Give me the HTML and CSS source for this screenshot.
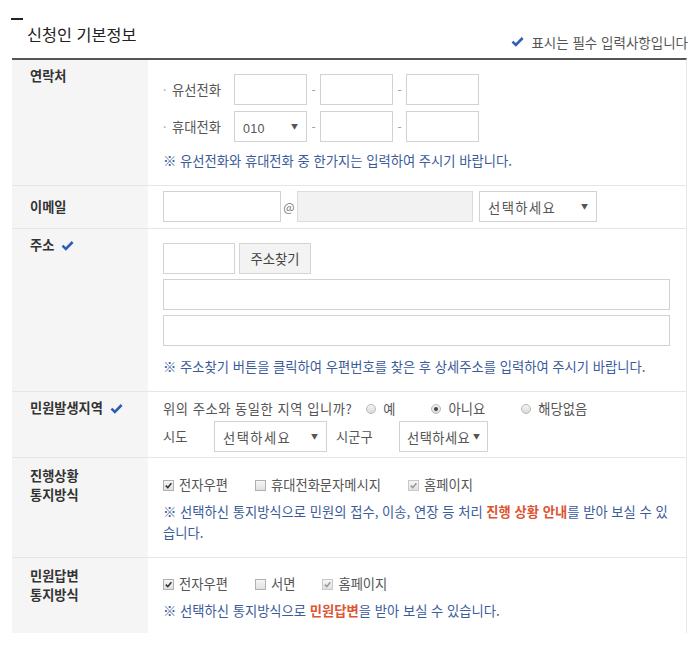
FILE: index.html
```html
<!DOCTYPE html>
<html lang="ko">
<head>
<meta charset="utf-8">
<title>신청인 기본정보</title>
<link rel="stylesheet" href="styles.css">
</head>
<body>
<div class="head">
  <div class="title-wrap">
    <span class="dash"></span>
    <h2 class="title">신청인 기본정보</h2>
  </div>
  <p class="req"><svg class="chk" viewBox="0 0 14 12"><path d="M1.5 6.2 L5.2 9.8 L12.6 2.2"/></svg>표시는 필수 입력사항입니다</p>
</div>

<div class="form">
  <div class="row r1">
    <div class="lbl">연락처</div>
    <div class="cell">
      <div class="line">
        <span class="ph-label"><i class="dot">·</i>유선전화</span>
        <input class="in w73" type="text"><span class="sep">-</span><input class="in w73" type="text"><span class="sep">-</span><input class="in w73" type="text">
      </div>
      <div class="line gap6">
        <span class="ph-label"><i class="dot">·</i>휴대전화</span>
        <div class="sel w73"><span class="sel-txt num">010</span><span class="arr">▼</span></div><span class="sep">-</span><input class="in w73" type="text"><span class="sep">-</span><input class="in w73" type="text">
      </div>
      <p class="note n1">※ 유선전화와 휴대전화 중 한가지는 입력하여 주시기 바랍니다.</p>
    </div>
  </div>

  <div class="row r2">
    <div class="lbl mid">이메일</div>
    <div class="cell">
      <div class="line">
        <input class="in w118" type="text"><span class="at">@</span><input class="in w176 gray" type="text"><div class="sel w118 ml6"><span class="sel-txt">선택하세요</span><span class="arr">▼</span></div>
      </div>
    </div>
  </div>

  <div class="row r3">
    <div class="lbl">주소 <svg class="chk lchk" viewBox="0 0 14 12"><path d="M1.5 6.2 L5.2 9.8 L12.6 2.2"/></svg></div>
    <div class="cell">
      <div class="line">
        <input class="in w72" type="text"><button class="btn" type="button">주소찾기</button>
      </div>
      <input class="in wide gap5" type="text">
      <input class="in wide gap5" type="text">
      <p class="note n3">※ 주소찾기 버튼을 클릭하여 우편번호를 찾은 후 상세주소를 입력하여 주시기 바랍니다.</p>
    </div>
  </div>

  <div class="row r4">
    <div class="lbl">민원발생지역 <svg class="chk lchk" viewBox="0 0 14 12"><path d="M1.5 6.2 L5.2 9.8 L12.6 2.2"/></svg></div>
    <div class="cell">
      <div class="line txt">
        <span class="q">위의 주소와 동일한 지역 입니까?</span>
        <label class="opt first"><span class="radio"></span>예</label>
        <label class="opt"><span class="radio on"></span>아니요</label>
        <label class="opt"><span class="radio"></span>해당없음</label>
      </div>
      <div class="line sido">
        <span class="k1">시도</span>
        <div class="sel w113"><span class="sel-txt">선택하세요</span><span class="arr">▼</span></div>
        <span class="k2">시군구</span>
        <div class="sel w89 tight"><span class="sel-txt">선택하세요</span><span class="arr">▼</span></div>
      </div>
    </div>
  </div>

  <div class="row r5">
    <div class="lbl two"><span class="ln">진행상황</span><span class="ln">통지방식</span></div>
    <div class="cell">
      <div class="line txt">
        <label class="ck"><span class="cb on"><svg viewBox="0 0 10 10"><path d="M2 5.2 L4.2 7.4 L8.2 2.6"/></svg></span>전자우편</label>
        <label class="ck"><span class="cb"></span>휴대전화문자메시지</label>
        <label class="ck"><span class="cb on dis"><svg viewBox="0 0 10 10"><path d="M2 5.2 L4.2 7.4 L8.2 2.6"/></svg></span>홈페이지</label>
      </div>
      <p class="note n5">※ 선택하신 통지방식으로 민원의 접수, 이송, 연장 등 처리 <b class="em">진행 상황 안내</b>를 받아 보실 수 있습니다.</p>
    </div>
  </div>

  <div class="row r6">
    <div class="lbl two"><span class="ln">민원답변</span><span class="ln">통지방식</span></div>
    <div class="cell">
      <div class="line txt">
        <label class="ck"><span class="cb on"><svg viewBox="0 0 10 10"><path d="M2 5.2 L4.2 7.4 L8.2 2.6"/></svg></span>전자우편</label>
        <label class="ck"><span class="cb"></span>서면</label>
        <label class="ck"><span class="cb on dis"><svg viewBox="0 0 10 10"><path d="M2 5.2 L4.2 7.4 L8.2 2.6"/></svg></span>홈페이지</label>
      </div>
      <p class="note n6">※ 선택하신 통지방식으로 <b class="em">민원답변</b>을 받아 보실 수 있습니다.</p>
    </div>
  </div>
</div>
</body>
</html>
```

FILE: styles.css
```css
* { box-sizing: border-box; }
html, body { margin: 0; padding: 0; background: #fff; }
body {
  font-family: "Noto Sans CJK KR", "Noto Sans", sans-serif;
  font-size: 13.3px;
  color: #555;
  width: 698px;
  height: 647px;
  overflow: hidden;
}

.head {
  display: flex;
  justify-content: space-between;
  height: 58px;
  padding: 18px 10px 0 11px;
}
.title-wrap { display: flex; flex-direction: column; align-items: flex-start; }
.dash { display: block; width: 12px; height: 2px; background: #222; }
.title {
  margin: 3px 0 0 16px;
  font-size: 16.3px;
  line-height: 22px;
  font-weight: normal;
  color: #222;
}
.req {
  margin: 7px 0 0 0;
  font-size: 13.5px;
  line-height: 18px;
  color: #555;
  display: flex;
  align-items: center;
}
.chk { width: 13px; height: 11px; margin-right: 7px; }
.chk path { fill: none; stroke: #2f5cb5; stroke-width: 2.8; stroke-linecap: butt; stroke-linejoin: miter; }
.lchk { margin: 0 0 0 3px; vertical-align: -1px; }

.form {
  width: 675px;
  margin-left: 12px;
  border-top: 2px solid #555;
  border-right: 1px solid #e8e8e8;
}
.row {
  display: grid;
  grid-template-columns: 136px 1fr;
  border-bottom: 1px solid #e6e6e6;
}
.row.r6 { border-bottom: 0; }
.lbl {
  background: #f5f5f5;
  padding: 7px 0 0 18px;
  font-weight: bold;
  font-size: 13.2px;
  line-height: 18px;
  color: #333;
}
.lbl.mid { display: flex; align-items: center; padding-top: 0; }
.lbl.two { padding-top: 8px; }
.ln { display: block; height: 19px; line-height: 19px; }

.cell { padding: 14px 16px 14px 15px; }
.r2 .cell { padding: 5px 16px 6px 15px; }
.r3 .cell { padding: 14px 16px 14px 15px; }
.r4 .cell { padding: 7px 16px 5px 15px; }
.r5 .cell { padding: 17px 16px 14px 15px; }
.r6 .cell { padding: 16px 16px 12px 15px; }

.line { display: flex; align-items: center; }
.gap6 { margin-top: 6px; }
.gap5 { margin-top: 5px; }
.line.txt { height: 20px; line-height: 20px; }

.ph-label { width: 71px; color: #555; display: flex; align-items: center; line-height: 20px; }
.dot { font-style: normal; color: #aaa; width: 9px; font-size: 12px; }

.in {
  display: block;
  height: 31px;
  border: 1px solid #d2d2d2;
  background: #fff;
  padding: 0 6px;
  font: inherit;
  outline: none;
}
.in.gray { background: #f2f2f2; border-color: #dcdcdc; }
.w72 { width: 72px; }
.w73 { width: 73px; }
.w118 { width: 118px; }
.w176 { width: 176px; }
.w113 { width: 113px; }
.w89 { width: 89px; }
.wide { width: 507px; }
.ml6 { margin-left: 6px; }

.sep { width: 13px; text-align: center; color: #999; font-size: 12px; }
.at { width: 16px; text-align: center; color: #777; font-size: 12px; }

.sel {
  height: 31px;
  border: 1px solid #d2d2d2;
  background: #fff;
  display: flex;
  align-items: center;
  justify-content: space-between;
  padding: 3px 8px 0 8px;
  color: #555;
  line-height: 20px;
}
.sel.tight { padding-left: 7px; padding-right: 7px; }
.sel-txt { font-size: 13.3px; letter-spacing: 1.4px; }
.sel.tight .sel-txt { letter-spacing: 0.4px; }
.sel-txt.num { font-family: "Liberation Sans", Arial, sans-serif; font-size: 12.5px; letter-spacing: 0.3px; padding-top: 2px; }
.arr { font-size: 7px; color: #555; margin-top: -4px; }

.btn {
  width: 72px;
  height: 31px;
  margin-left: 4px;
  border: 1px solid #d4d4d4;
  background: #f3f3f3;
  font: inherit;
  font-size: 13.3px;
  color: #444;
  padding: 0;
}

.note {
  margin: 0;
  font-size: 13.3px;
  line-height: 20px;
  color: #3b5b9b;
}
.n1 { margin-top: 9px; }
.n3 { margin-top: 11px; }
.n5 { margin-top: 6px; line-height: 21px; }
.n6 { margin-top: 7px; }
.em { color: #dd5433; font-weight: bold; }

.q { letter-spacing: 0.5px; }
.opt { display: flex; align-items: center; margin-left: 36px; color: #555; }
.opt.first { margin-left: 14px; }
.radio {
  width: 10px;
  height: 10px;
  border-radius: 50%;
  border: 1px solid #b8b8b8;
  background: linear-gradient(#f4f4f4, #dadada);
  margin-right: 7px;
  display: flex;
  align-items: center;
  justify-content: center;
}
.radio.on::after {
  content: "";
  width: 4px;
  height: 4px;
  border-radius: 50%;
  background: #444;
}

.sido { margin-top: 2px; }
.k1 { width: 51px; color: #555; }
.k2 { width: 63px; margin-left: 9px; color: #555; }

.ck { display: flex; align-items: center; margin-right: 27px; color: #555; }
.cb {
  width: 11px;
  height: 11px;
  border: 1px solid #b0b0b0;
  background: linear-gradient(#f6f6f6, #e0e0e0);
  margin-right: 5px;
  display: flex;
  align-items: center;
  justify-content: center;
}
.cb svg { width: 9px; height: 9px; }
.cb svg path { fill: none; stroke: #333; stroke-width: 1.8; }
.cb.dis { border-color: #c8c8c8; }
.cb.dis svg path { stroke: #999; }
```
